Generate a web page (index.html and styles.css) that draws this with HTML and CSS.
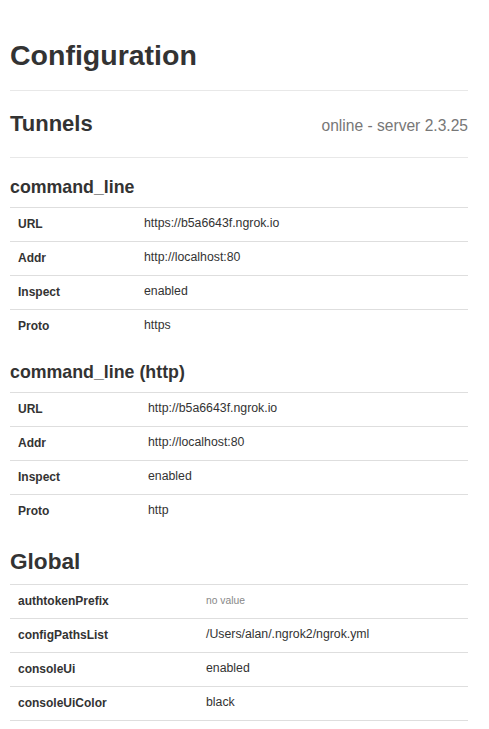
FILE: index.html
```html
<!DOCTYPE html>
<html>
<head>
<meta charset="utf-8">
<title>Configuration</title>
<link rel="stylesheet" href="styles.css">
</head>
<body>
<div class="page">
  <header class="page-header">
    <h1 class="title">Configuration</h1>
  </header>

  <div class="section-header">
    <h2 class="section-title">Tunnels</h2>
    <span class="status">online - server 2.3.25</span>
  </div>

  <h3 class="tunnel-title">command_line</h3>
  <table class="cfg cfg-t1">
    <tr><td class="key">URL</td><td class="val">https://b5a6643f.ngrok.io</td></tr>
    <tr><td class="key">Addr</td><td class="val">http://localhost:80</td></tr>
    <tr><td class="key">Inspect</td><td class="val">enabled</td></tr>
    <tr><td class="key">Proto</td><td class="val">https</td></tr>
  </table>

  <h3 class="tunnel-title">command_line (http)</h3>
  <table class="cfg cfg-t2">
    <tr><td class="key">URL</td><td class="val">http://b5a6643f.ngrok.io</td></tr>
    <tr><td class="key">Addr</td><td class="val">http://localhost:80</td></tr>
    <tr><td class="key">Inspect</td><td class="val">enabled</td></tr>
    <tr><td class="key">Proto</td><td class="val">http</td></tr>
  </table>

  <h2 class="global-title">Global</h2>
  <table class="cfg cfg-global">
    <tr><td class="key">authtokenPrefix</td><td class="val"><span class="novalue">no value</span></td></tr>
    <tr><td class="key">configPathsList</td><td class="val">/Users/alan/.ngrok2/ngrok.yml</td></tr>
    <tr><td class="key">consoleUi</td><td class="val">enabled</td></tr>
    <tr><td class="key">consoleUiColor</td><td class="val">black</td></tr>
  </table>
</div>
</body>
</html>
```

FILE: styles.css
```css
html, body {
  margin: 0;
  padding: 0;
  background: #fff;
}

body {
  font-family: "Liberation Sans", Arial, sans-serif;
  color: #333;
}

.page {
  width: 458px;
  padding: 0 21px 0 10px;
}

.page-header {
  padding-bottom: 18px;
  border-bottom: 1px solid #e8e8e8;
}

.title {
  margin: 38px 0 0;
  font-size: 28.5px;
  line-height: 34px;
  font-weight: bold;
  color: #333;
}

.section-header {
  display: flex;
  justify-content: space-between;
  align-items: baseline;
  padding: 20px 0;
  border-bottom: 1px solid #e8e8e8;
}

.section-title {
  margin: 0;
  font-size: 22px;
  line-height: 26px;
  font-weight: bold;
  color: #333;
}

.status {
  font-size: 15.6px;
  color: #777;
}

.tunnel-title {
  margin: 18px 0 9px;
  font-size: 17.8px;
  line-height: 22px;
  font-weight: bold;
  color: #333;
}

.global-title {
  margin: 21px 0 9px;
  font-size: 22.6px;
  line-height: 26px;
  font-weight: bold;
  color: #333;
}

.cfg {
  width: 458px;
  border-collapse: collapse;
  table-layout: fixed;
}

.cfg td {
  border-top: 1px solid #dedede;
  vertical-align: top;
  line-height: 17px;
}

.cfg-global {
  border-bottom: 1px solid #dedede;
}

.key {
  padding: 8px 8px;
  font-size: 12px;
  font-weight: bold;
  color: #333;
}

.val {
  padding: 7px 8px 9px;
  font-size: 12.3px;
  color: #333;
}

.cfg-t1 .key { width: 110px; }
.cfg-t2 .key { width: 114px; }
.cfg-global .key { width: 172px; }

.novalue {
  font-size: 10.3px;
  color: #888;
}
```
